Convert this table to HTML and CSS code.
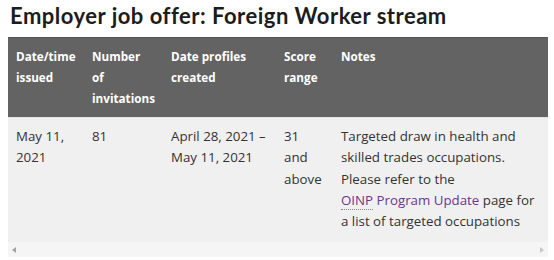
FILE: index.html
```html
<!DOCTYPE html>
<html>
<head>
<meta charset="utf-8">
<link rel="stylesheet" href="styles.css">
</head>
<body>
<h2 class="title">Employer job offer: Foreign Worker stream</h2>
<div class="wrap">
  <table class="draws">
    <thead>
      <tr>
        <th class="c1">Date/time issued</th>
        <th class="c2">Number of invitations</th>
        <th class="c3">Date profiles created</th>
        <th class="c4">Score range</th>
        <th class="c5">Notes</th>
      </tr>
    </thead>
    <tbody>
      <tr>
        <td>May 11, 2021</td>
        <td>81</td>
        <td>April 28, 2021 – May 11, 2021</td>
        <td>31 and above</td>
        <td>Targeted draw in health and skilled trades occupations. Please refer to the <a class="link" href="#"><abbr class="abbr">OINP</abbr> Program Update</a> page for a list of targeted occupations</td>
      </tr>
    </tbody>
  </table>
  <div class="scrollbar">
    <span class="arrow left"></span>
    <span class="arrow right"></span>
  </div>
</div>
</body>
</html>
```
FILE: styles.css
```css
html, body {
  margin: 0;
  padding: 0;
  background: #fff;
}
body {
  padding: 0 6px 0 8px;
  font-family: "Open Sans", "Liberation Sans", sans-serif;
  color: #333;
}
.title {
  margin: 0;
  padding: 3px 0 0 2px;
  height: 37px;
  box-sizing: border-box;
  font-family: Lato, "Open Sans", sans-serif;
  font-weight: 700;
  font-size: 22px;
  line-height: 26px;
  color: #1c1c1c;
  letter-spacing: 0.5px;
}
.wrap {
  width: 540px;
}
.draws {
  width: 540px;
  border-collapse: collapse;
  table-layout: fixed;
  font-size: 13.3px;
  line-height: 21.3px;
}
.draws th {
  background: #636363;
  color: #fff;
  font-size: 11.7px;
  line-height: 21px;
  font-weight: 700;
  text-align: left;
  vertical-align: top;
  padding: 8px 8px 8px 8px;
  border-top: 1px solid #555;
}
.draws td {
  background: #f0f0f0;
  vertical-align: top;
  padding: 8px 8px 10px 8px;
  border-top: 1px solid #e6e6e6;
}
.c1 { width: 60px; }
.c2 { width: 63px; }
.c3 { width: 97px; }
.c4 { width: 41px; }
.link {
  color: #6b3594;
  text-decoration: none;
  white-space: nowrap;
}
.abbr {
  text-decoration: none;
  border-bottom: 1px dotted #888;
}
.scrollbar {
  height: 15px;
  background: #f5f5f5;
  display: flex;
  align-items: center;
  justify-content: space-between;
  padding: 0 4px;
}
.arrow {
  width: 0;
  height: 0;
  border-top: 3px solid transparent;
  border-bottom: 3px solid transparent;
}
.arrow.left { border-right: 4px solid #a3a3a3; }
.arrow.right { border-left: 4px solid #c8c8c8; }
```
